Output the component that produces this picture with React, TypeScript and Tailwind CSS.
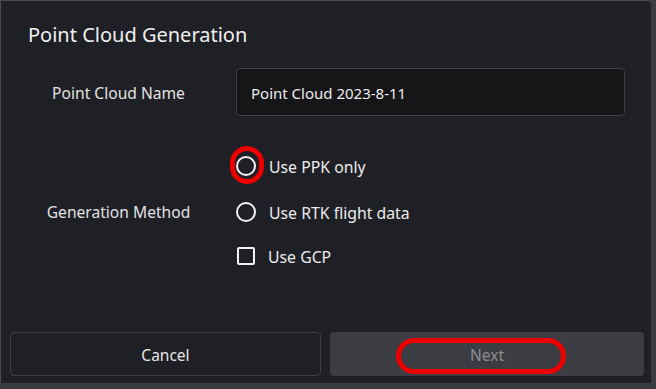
import { useState } from "react";

type Method = "ppk" | "rtk";

export default function App() {
  const [name, setName] = useState("Point Cloud 2023-8-11");
  const [method, setMethod] = useState<Method | null>(null);
  const [useGcp, setUseGcp] = useState(false);

  const font = { fontFamily: '"Noto Sans", "Open Sans", sans-serif' };

  return (
    <div className="w-[656px] h-[389px] bg-[#3a3b3f] overflow-hidden" style={font}>
      <div className="relative w-[651px] h-[383px] bg-[#1f2025] border-t border-l border-[#4a4b50] rounded-tr-[4px] flex flex-col">
        <h1 className="pl-[27px] pt-[20px] text-[20px] leading-[28px] text-[#f0f0f0]">
          Point Cloud Generation
        </h1>

        <div className="mt-[19px] flex items-center">
          <div className="w-[235px] pt-[2px] text-center text-[15.6px] leading-[22px] text-[#e2e2e2]">
            Point Cloud Name
          </div>
          <input
            type="text"
            value={name}
            onChange={(e) => setName(e.target.value)}
            className="w-[389px] h-[48px] px-[14px] pt-[2px] bg-[#161619] border border-[#3e3f44] rounded-[4px] text-[15px] text-[#ececec] outline-none"
          />
        </div>

        <div className="mt-[27px] flex items-center">
          <div className="w-[235px] pt-[2px] text-center text-[15.6px] leading-[22px] text-[#e2e2e2]">
            Generation Method
          </div>
          <div className="flex flex-col">
            <button
              onClick={() => setMethod("ppk")}
              className="h-[46px] flex items-center gap-[13px] text-[15.8px] leading-[22px] text-[#ececec]"
            >
              <span className="w-[20px] h-[20px] rounded-full border-2 border-[#f2f2f2] flex items-center justify-center">
                {method === "ppk" && <span className="w-[10px] h-[10px] rounded-full bg-[#f2f2f2]" />}
              </span>
              <span className="pt-[2px]">Use PPK only</span>
            </button>
            <button
              onClick={() => setMethod("rtk")}
              className="h-[46px] flex items-center gap-[13px] text-[15.8px] leading-[22px] text-[#ececec]"
            >
              <span className="w-[20px] h-[20px] rounded-full border-2 border-[#f2f2f2] flex items-center justify-center">
                {method === "rtk" && <span className="w-[10px] h-[10px] rounded-full bg-[#f2f2f2]" />}
              </span>
              <span className="pt-[2px]">Use RTK flight data</span>
            </button>
            <button
              onClick={() => setUseGcp(!useGcp)}
              className="h-[44px] pb-[2px] flex items-center gap-[13px] text-[15.8px] leading-[22px] text-[#ececec]"
            >
              <span className="ml-px w-[18px] h-[18px] rounded-[2px] border-2 border-[#f2f2f2] flex items-center justify-center text-[12px] leading-none">
                {useGcp && "✓"}
              </span>
              <span className="pt-[2px]">Use GCP</span>
            </button>
          </div>
        </div>

        <div className="mt-auto mb-[7px] flex gap-[9px] pl-[9px] pr-[7px]">
          <button className="w-[311px] h-[44px] pt-[2px] border border-[#3e3f44] rounded-[4px] text-[15.5px] leading-[22px] text-[#e6e6e6]">
            Cancel
          </button>
          <button
            disabled={!method}
            className="flex-1 h-[44px] pt-[2px] bg-[#3c3d42] rounded-[4px] text-[15.5px] leading-[22px] text-[#8c8d91]"
          >
            Next
          </button>
        </div>

        {/* red annotation marks */}
        <div className="absolute left-[229px] top-[145px] w-[34px] h-[38px] rounded-full border-[5px] border-[#ee0000]" />
        <div className="absolute left-[395px] top-[337px] w-[170px] h-[36px] rounded-full border-[5px] border-[#ee0000]" />
      </div>
    </div>
  );
}
